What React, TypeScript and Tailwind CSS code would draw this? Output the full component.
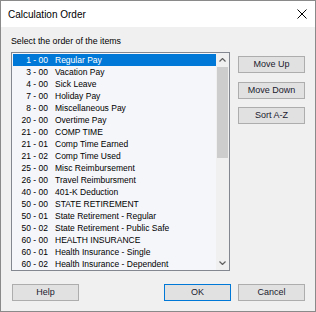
import React from 'react';

const ITEMS = [
  ['1 - 00', 'Regular Pay'],
  ['3 - 00', 'Vacation Pay'],
  ['4 - 00', 'Sick Leave'],
  ['7 - 00', 'Holiday Pay'],
  ['8 - 00', 'Miscellaneous Pay'],
  ['20 - 00', 'Overtime Pay'],
  ['21 - 00', 'COMP TIME'],
  ['21 - 01', 'Comp Time Earned'],
  ['21 - 02', 'Comp Time Used'],
  ['25 - 00', 'Misc Reimbursement'],
  ['26 - 00', 'Travel Reimbursment'],
  ['40 - 00', '401-K Deduction'],
  ['50 - 00', 'STATE RETIREMENT'],
  ['50 - 01', 'State Retirement - Regular'],
  ['50 - 02', 'State Retirement - Public Safe'],
  ['60 - 00', 'HEALTH INSURANCE'],
  ['60 - 01', 'Health Insurance - Single'],
  ['60 - 02', 'Health Insurance - Dependent'],
];

function Btn({ label, primary }: { label: string; primary?: boolean }) {
  return (
    <button
      className={`w-[67px] h-[17px] bg-[#e1e1e1] border text-[9px] leading-none text-[#1a1a2e] flex items-center justify-center ${
        primary ? 'border-[#0078d7]' : 'border-[#adadad]'
      }`}
    >
      {label}
    </button>
  );
}

export default function App() {
  return (
    <div
      className="w-[316px] h-[312px] border border-[#8a8a8a] bg-white flex flex-col"
      style={{ fontFamily: '"Liberation Sans", Arial, sans-serif' }}
    >
      {/* Title bar */}
      <div className="h-[26px] shrink-0 flex items-center justify-between pl-[7px] pr-[8px] bg-white">
        <span className="text-[10px] text-black">Calculation Order</span>
        <svg width="10" height="10" viewBox="0 0 10 10" className="text-black">
          <path d="M0.5 0.5 L9.5 9.5 M9.5 0.5 L0.5 9.5" stroke="currentColor" strokeWidth="1" />
        </svg>
      </div>

      {/* Body */}
      <div className="flex-1 bg-[#f0f0f0] pl-[10px] pt-[9px]">
        <div className="text-[8.8px] leading-[11px] text-black">Select the order of the items</div>

        <div className="flex mt-[5px] gap-[8px]">
          {/* Listbox */}
          <div className="w-[219px] h-[219px] border border-[#828790] bg-[#f5f6fa] flex overflow-hidden">
            <div className="flex-1 pt-[1px] pl-[1px] overflow-hidden">
              {ITEMS.map(([code, name], i) => (
                <div
                  key={code}
                  className={`h-[12px] flex items-center text-[8.5px] leading-none whitespace-nowrap ${
                    i === 0 ? 'bg-[#0078d7] text-white' : 'text-black'
                  }`}
                >
                  <span className="w-[35px] text-right shrink-0">{code}</span>
                  <span className="ml-[7px]">{name}</span>
                </div>
              ))}
            </div>
            {/* Scrollbar */}
            <div className="w-[13px] shrink-0 bg-[#f0f0f0] flex flex-col">
              <div className="h-[14px] flex items-center justify-center">
                <svg width="7" height="4" viewBox="0 0 7 4">
                  <path d="M0.5 3.5 L3.5 0.5 L6.5 3.5" fill="none" stroke="#606060" strokeWidth="1.2" />
                </svg>
              </div>
              <div className="h-[91px] mx-[1px] bg-[#cdcdcd]" />
              <div className="flex-1" />
              <div className="h-[14px] flex items-center justify-center">
                <svg width="7" height="4" viewBox="0 0 7 4">
                  <path d="M0.5 0.5 L3.5 3.5 L6.5 0.5" fill="none" stroke="#606060" strokeWidth="1.2" />
                </svg>
              </div>
            </div>
          </div>

          {/* Right buttons */}
          <div className="flex flex-col pt-[4px]">
            <Btn label="Move Up" />
            <div className="mt-[9px]">
              <Btn label="Move Down" />
            </div>
            <div className="mt-[8px]">
              <Btn label="Sort A-Z" />
            </div>
          </div>
        </div>

        {/* Bottom buttons */}
        <div className="flex mt-[13px] pl-[1px]">
          <Btn label="Help" />
          <div className="ml-[85px]">
            <Btn label="OK" primary />
          </div>
          <div className="ml-[7px]">
            <Btn label="Cancel" />
          </div>
        </div>
      </div>
    </div>
  );
}
